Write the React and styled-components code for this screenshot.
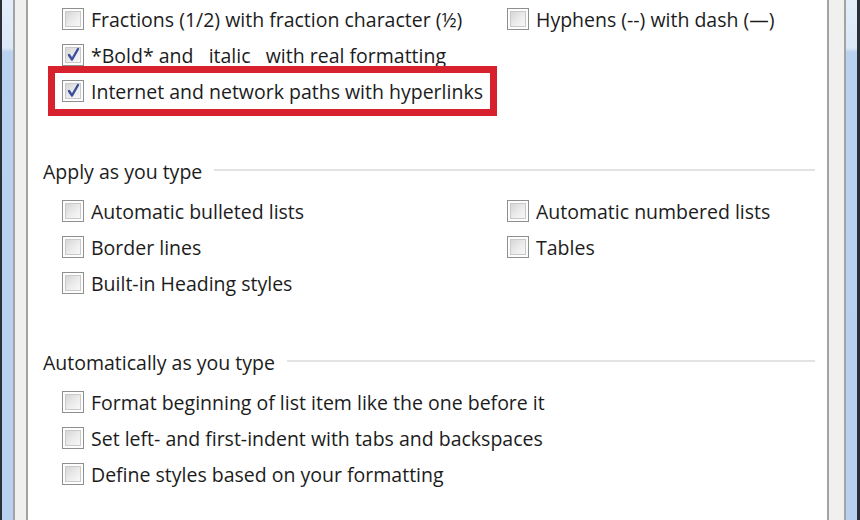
import React from "react";
import styled, { createGlobalStyle } from "styled-components";

const GlobalStyle = createGlobalStyle`
  html, body {
    margin: 0;
    padding: 0;
    background: #ffffff;
  }
  body {
    font-family: "Open Sans", "Liberation Sans", sans-serif;
  }
`;

// window frame
const Window = styled.div`
  display: flex;
  flex-direction: row;
  width: 860px;
  height: 520px;
  overflow: hidden;
`;

const FrameEdge = styled.div`
  width: 11px;
  background: linear-gradient(180deg, #e3eefa 0px, #dbe8f7 48px, #b9d2ef 52px, #b8d1ee 100%);
  border-left: ${(p) => (p.$side === "left" ? "2px solid #2a2f38" : "none")};
  border-right: ${(p) => (p.$side === "right" ? "3px solid #2a2f38" : "none")};
`;

const Gutter = styled.div`
  width: ${(p) => (p.$side === "right" ? 15 : 11)}px;
  background: #f0f0ee;
  border-left: 2px solid #a3a3a3;
  border-right: 2px solid #a3a3a3;
`;

const Content = styled.div`
  flex: 1;
  background: #ffffff;
  padding: 1px 12px 0 0;
  color: #1c1c1c;
  font-size: 19.5px;
`;

// sections
const Section = styled.div`
  margin-top: ${(p) => p.$top || 0}px;
`;

const Heading = styled.div`
  display: flex;
  align-items: center;
  gap: 12px;
  height: 30px;
  padding-left: 15px;
  margin-bottom: 7px;
`;

const HeadingLine = styled.div`
  flex: 1;
  height: 0;
  border-top: 2px solid #e3e3e3;
  margin-top: -2px;
`;

const OptionGrid = styled.div`
  display: grid;
  grid-template-columns: 445px 1fr;
  padding-left: 34px;
`;

const Row = styled.label`
  display: flex;
  align-items: center;
  gap: 7px;
  height: 36px;
  white-space: pre;
  grid-column: ${(p) => (p.$wide ? "1 / span 2" : "auto")};
`;

const HighlightRow = styled(Row)`
  justify-self: start;
  margin-left: -7px;
  padding: 0 7px;
  outline: 7px solid #d7212c;
`;

const Box = styled.span`
  position: relative;
  width: 20px;
  height: 20px;
  flex: none;
  border: 1px solid #8e8f8f;
  background: #fdfdfd;
  &::before {
    content: "";
    position: absolute;
    inset: 2px;
    border: 1px solid #c9c9c9;
    background: linear-gradient(135deg, #d6d6d6 0%, #ececec 55%, #f8f8f8 100%);
  }
`;

const Check = styled.svg`
  position: absolute;
  left: 2px;
  top: 1px;
  width: 17px;
  height: 17px;
`;

const CheckBox = ({ checked }) => (
  <Box>
    {checked && (
      <Check viewBox="0 0 17 17">
        <path
          d="M4 9 L7 13.5 L13 3"
          fill="none"
          stroke="#3b4f9c"
          strokeWidth="2.4"
          strokeLinecap="round"
          strokeLinejoin="round"
        />
      </Check>
    )}
  </Box>
);

const Option = ({ label, checked, wide }) => (
  <Row $wide={wide}>
    <CheckBox checked={checked} />
    <span>{label}</span>
  </Row>
);

export default function App() {
  return (
    <>
      <GlobalStyle />
      <Window>
        <FrameEdge $side="left" />
        <Gutter />
        <Content>
          <Section>
            <OptionGrid>
              <Option label="Fractions (1/2) with fraction character (½)" />
              <Option label="Hyphens (--) with dash (—)" />
              <Option label="*Bold* and   italic   with real formatting" checked wide />
              <HighlightRow $wide>
                <CheckBox checked />
                <span>Internet and network paths with hyperlinks</span>
              </HighlightRow>
            </OptionGrid>
          </Section>

          <Section $top={47}>
            <Heading>
              <span>Apply as you type</span>
              <HeadingLine />
            </Heading>
            <OptionGrid>
              <Option label="Automatic bulleted lists" />
              <Option label="Automatic numbered lists" />
              <Option label="Border lines" />
              <Option label="Tables" />
              <Option label="Built-in Heading styles" wide />
            </OptionGrid>
          </Section>

          <Section $top={46}>
            <Heading>
              <span>Automatically as you type</span>
              <HeadingLine />
            </Heading>
            <OptionGrid>
              <Option label="Format beginning of list item like the one before it" wide />
              <Option label="Set left- and first-indent with tabs and backspaces" wide />
              <Option label="Define styles based on your formatting" wide />
            </OptionGrid>
          </Section>
        </Content>
        <Gutter $side="right" />
        <FrameEdge $side="right" />
      </Window>
    </>
  );
}
